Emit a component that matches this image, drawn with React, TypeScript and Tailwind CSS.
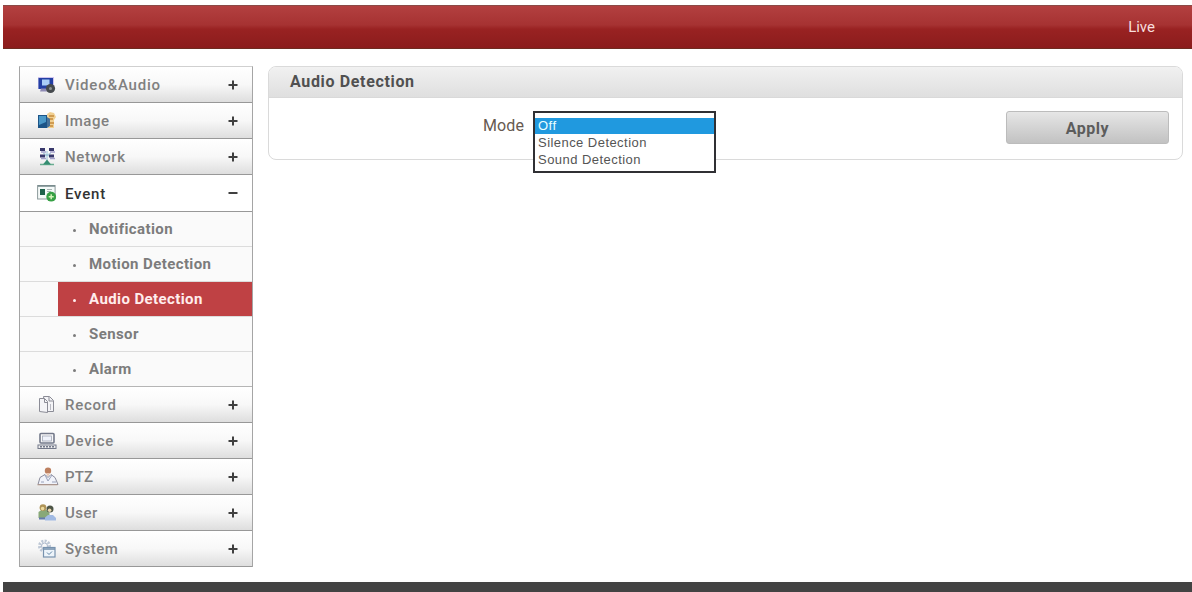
import React, { useState } from "react";

const VideoIcon = () => (
  <svg width="20" height="20" viewBox="0 0 20 20">
    <rect x="1" y="2" width="16" height="12" fill="#cfc4ee" />
    <rect x="1.5" y="3" width="14.5" height="11" fill="#2340a4" />
    <rect x="5" y="4.5" width="7.5" height="6" fill="#a9cdf8" />
    <path d="M3 16.5h7l-1-3H4z" fill="#8f8bb5" />
    <circle cx="13.5" cy="13.5" r="4.6" fill="#454a4e" />
    <circle cx="13.5" cy="13.5" r="1.5" fill="#8e9492" />
  </svg>
);

const ImageIcon = () => (
  <svg width="20" height="20" viewBox="0 0 20 20">
    <path d="M10 3l3-2 4 1 2 4-2 3v8h-6z" fill="#f0cf91" />
    <path d="M12 5h5M11 8h5M13 12h4M13 15h3" stroke="#c58b3c" strokeWidth="1.3" />
    <rect x="1" y="4" width="9" height="13" fill="#1c5487" />
    <path d="M2 5h7v6l-7 3z" fill="#4b98c8" />
    <path d="M10 6l3 2v7l-3 2z" fill="#477198" />
  </svg>
);

const NetworkIcon = () => (
  <svg width="20" height="20" viewBox="0 0 20 20">
    <path d="M10 4v10M6 6l8 4M14 6l-8 4" stroke="#9cc4d8" strokeWidth="1" />
    <path d="M3 1h5v3H3zM12 1h5v3h-5zM3 7.5h5v3H3zM12 7.5h5v3h-5z" fill="#39396c" />
    <path d="M4 5h5M13 5h5M4 11.5h5M13 11.5h5" stroke="#a4a1cb" strokeWidth="1.6" />
    <path d="M3 17.5h14" stroke="#69ae91" strokeWidth="1.5" />
    <path d="M10 12.5l-4 5h8z" fill="#348d71" />
  </svg>
);

const EventIcon = () => (
  <svg width="20" height="20" viewBox="0 0 20 20">
    <rect x=".6" y="2.5" width="17.5" height="13.5" fill="#f5faf9" stroke="#8c9a9b" />
    <path d="M1 3h17" stroke="#75878a" strokeWidth="1.5" />
    <rect x="3" y="6" width="5" height="6" fill="#1e624b" />
    <path d="M10 6.5h5M10 8.5h4" stroke="#a9b5b4" />
    <circle cx="14.2" cy="13.7" r="4.9" fill="#37a045" />
    <path d="M11.7 13.7h5M14.2 11.2v5" stroke="#d4f2b9" strokeWidth="1.5" />
  </svg>
);

const RecordIcon = () => (
  <svg width="20" height="20" viewBox="0 0 20 20" fill="#f4f4f7" stroke="#8b8c96" strokeWidth="1">
    <path d="M6.5 1.5h6l4 4v11H8z" />
    <path d="M2.5 3.5h5l3 3v11l-8-1z" />
    <path d="M7.5 3.5v4h3M12 2v4h4" fill="none" />
    <path d="M13.5 9v6" stroke="#b9bac2" />
  </svg>
);

const DeviceIcon = () => (
  <svg width="20" height="20" viewBox="0 0 20 20" fill="none" stroke="#73798a">
    <rect x="3" y="2.5" width="14" height="9.5" rx="1" strokeWidth="1.6" />
    <rect x="5.5" y="5" width="9" height="5" fill="#f0f3fb" stroke="#a3a9b8" strokeWidth=".8" />
    <rect x="1" y="14" width="18" height="3.5" />
    <path d="M3 15.8h14" strokeDasharray="2 1" strokeWidth="1.5" />
  </svg>
);

const PtzIcon = () => (
  <svg width="22" height="20" viewBox="0 0 22 20">
    <path d="M1 17.5l2-7 5-3 3 3 3-3 4 3 3 7z" fill="#f1f3fa" stroke="#8b8c9d" />
    <path d="M8 8l3 6 4-6M4 15h3M15 15h4" stroke="#98a1bb" fill="none" />
    <circle cx="11" cy="3.7" r="3.2" fill="#bd8060" />
    <path d="M9 6h4l-1.5 3h-1z" fill="#e8c7b5" />
    <path d="M.5 17.8h20" stroke="#b89b89" />
  </svg>
);

const UserIcon = () => (
  <svg width="20" height="20" viewBox="0 0 20 20">
    <path d="M1.5 15V9l3-2h5l3 3v5z" fill="#88a878" />
    <path d="M2 15.5h9" stroke="#657bad" strokeWidth="2" />
    <circle cx="6" cy="4.6" r="3.4" fill="#ae9357" />
    <circle cx="5.6" cy="5.6" r="1.8" fill="#edda9d" />
    <circle cx="13" cy="6" r="3.5" fill="#4d5546" />
    <circle cx="12.6" cy="7.3" r="1.8" fill="#ead6ae" />
    <path d="M8 17.5v-3l3-2.5h5l3 3v2.5z" fill="#a1bae3" />
  </svg>
);

const SystemIcon = () => (
  <svg width="20" height="20" viewBox="0 0 20 20" fill="none">
    <circle cx="7.5" cy="7" r="5" stroke="#bdc7d5" strokeWidth="3" strokeDasharray="2 1.3" />
    <circle cx="7.5" cy="7" r="3" stroke="#aab6ca" />
    <rect x="6.5" y="8.5" width="11.5" height="9.5" fill="#edf4fa" stroke="#7792ae" strokeWidth="1.2" />
    <path d="M6.5 10H18" stroke="#7792ae" strokeWidth="1.6" />
    <path d="M10 13.5l2 2 3-3" stroke="#5f84a5" />
  </svg>
);

const menu = [
  { name: "Video&Audio", icon: VideoIcon, tracking: "tracking-[0.8px]" },
  { name: "Image", icon: ImageIcon, tracking: "tracking-[0.5px]" },
  { name: "Network", icon: NetworkIcon, tracking: "tracking-[0.6px]" },
  { name: "Event", icon: EventIcon, tracking: "tracking-[0.8px]" },
  { name: "Record", icon: RecordIcon, tracking: "tracking-[0.7px]" },
  { name: "Device", icon: DeviceIcon, tracking: "tracking-[0.7px]" },
  { name: "PTZ", icon: PtzIcon, tracking: "tracking-[0.2px]" },
  { name: "User", icon: UserIcon, tracking: "tracking-[0.5px]" },
  { name: "System", icon: SystemIcon, tracking: "tracking-[0.5px]" },
];

const eventItems = ["Notification", "Motion Detection", "Audio Detection", "Sensor", "Alarm"];
const modes = ["Off", "Silence Detection", "Sound Detection"];

const App: React.FC = () => {
  const [openMenu, setOpenMenu] = useState("Event");
  const [page, setPage] = useState("Audio Detection");
  const [mode, setMode] = useState("Off");

  return (
    <div className="h-[592px] flex flex-col overflow-hidden bg-white pl-[3px] pt-[5px] font-['Roboto','Liberation_Sans',sans-serif]">
      <header className="h-11 shrink-0 flex items-center justify-end pr-[37px] border-t border-b border-t-[#8b4a46] border-b-[#6e2b20] bg-[linear-gradient(#b34040_0%,#a63232_45%,#992222_55%,#8b1c1c_100%)]">
        <a className="text-[15px] text-[#f7dede]">Live</a>
      </header>

      <div className="flex items-start pt-[17px] pl-4 pr-[9px]">
        <nav className="w-[234px] shrink-0 border border-b-0 border-[#a5a5a5] border-t-[#d0d0d0]">
          {menu.map(({ name, icon: Icon, tracking }) => {
            const open = openMenu === name;
            return (
              <div key={name}>
                <button
                  onClick={() => setOpenMenu(open ? "" : name)}
                  className={`w-full flex items-center pl-[17px] pr-[14px] border-b border-[#989898] ${
                    open
                      ? "h-[37px] bg-white text-[#333]"
                      : "h-9 bg-linear-to-b from-white via-[#f8f8f8] to-[#dedede] text-[#808080]"
                  }`}
                >
                  <span className="w-[28px] shrink-0">
                    <Icon />
                  </span>
                  <span className={`pt-0.5 text-[15px] font-medium ${tracking}`}>{name}</span>
                  <svg className="ml-auto" width="10" height="10" viewBox="0 0 10 10" stroke="#404040" strokeWidth="2">
                    <path d={open ? "M0.5 5h9" : "M0.5 5h9M5 0.5v9"} />
                  </svg>
                </button>
                {open && name === "Event" && (
                  <ul className="bg-[#fafafa]">
                    {eventItems.map((item) => (
                      <li key={item} className="h-[35px] pl-[38px] border-b border-[#dcdcdc] last:border-[#b5b5b5]">
                        <button
                          onClick={() => setPage(item)}
                          className={`w-full h-full flex items-center pl-[15px] text-[15px] font-bold tracking-[0.4px] ${
                            item === page ? "bg-[#bf4144] text-[#ffeded]" : "text-[#7c7c7c]"
                          }`}
                        >
                          <span className="w-[3px] h-[3px] mr-[13px] mt-[3px] rounded-full bg-current" />
                          {item}
                        </button>
                      </li>
                    ))}
                  </ul>
                )}
              </div>
            );
          })}
        </nav>

        <main className="flex-1 h-[94px] ml-[15px] border border-[#dadada] rounded-lg">
          <h1 className="h-[31px] flex items-center pl-[21px] rounded-t-[7px] border-b border-[#d9d9d9] bg-linear-to-b from-[#f1f1f1] to-[#dfdfdf] text-base font-bold tracking-[0.65px] text-[#505050]">
            {page}
          </h1>
          <div className="flex items-start justify-between pl-[214px] pr-[13px] pt-[13px]">
            <div className="flex items-start">
              <label className="pt-[3px] text-base text-[#675a50] tracking-[0.1px]">Mode</label>
              <div className="relative ml-[9px] w-[183px] h-8">
                <ul className="absolute inset-x-0 top-0 h-[62px] border-2 border-[#303034] bg-white pt-[5px] font-['Liberation_Sans',sans-serif] text-[13px] leading-4 tracking-[0.45px]">
                  {modes.map((m) => (
                    <li
                      key={m}
                      onClick={() => setMode(m)}
                      className={`h-4 pl-[3px] mb-px ${m === mode ? "bg-[#2099df] text-[#e8ffff]" : "text-[#555]"}`}
                    >
                      {m}
                    </li>
                  ))}
                </ul>
              </div>
            </div>
            <button className="w-[163px] h-[33px] pt-0.5 rounded-[3px] border border-[#bcbcbc] bg-linear-to-b from-[#e6e6e6] to-[#c2c2c2] text-base font-bold tracking-[0.5px] text-[#5c5c5c]">
              Apply
            </button>
          </div>
        </main>
      </div>

      <footer className="mt-auto h-2.5 shrink-0 bg-[#434343]" />
    </div>
  );
};

export default App;
